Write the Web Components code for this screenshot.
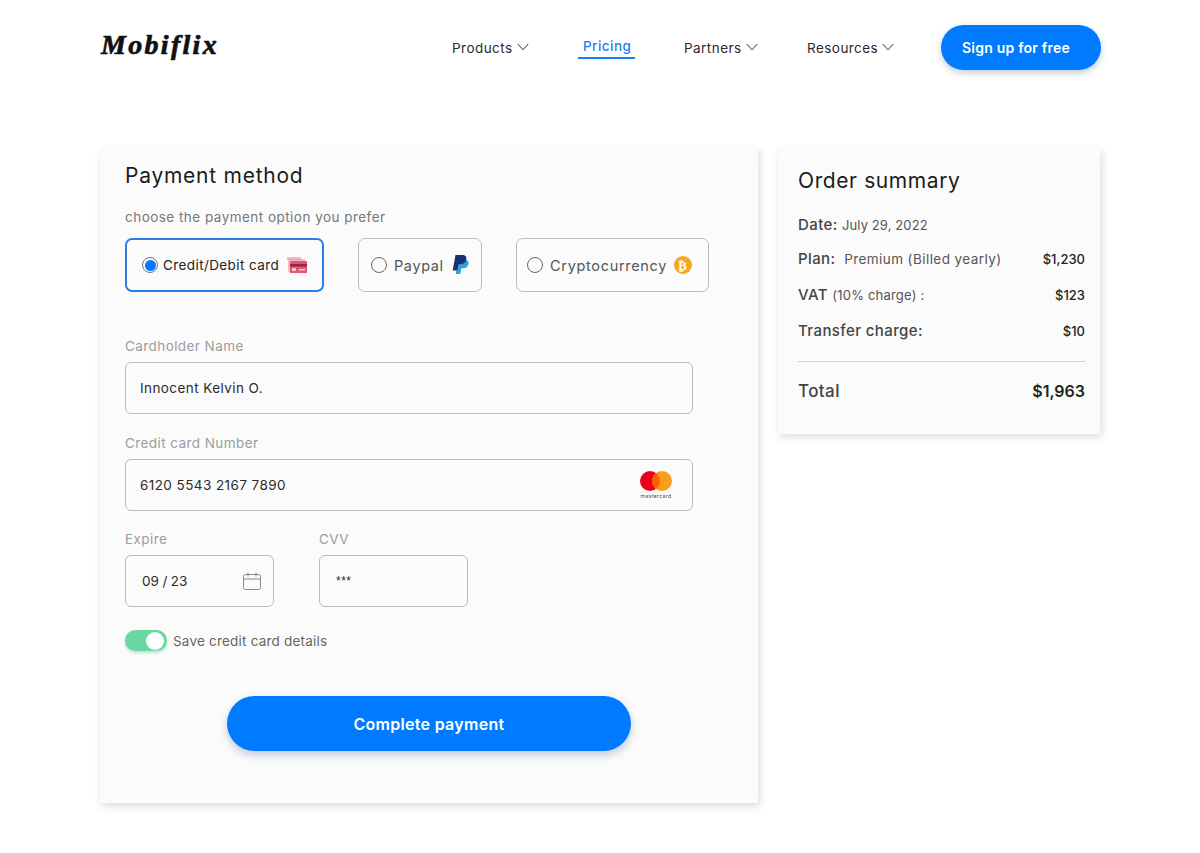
<!DOCTYPE html>
<html lang="en">
<head>
<meta charset="utf-8">
<title>Mobiflix payment</title>
<style>
html,body{margin:0;padding:0;background:#fff;}
body{font-family:"Inter","Liberation Sans",sans-serif;color:#222;}
</style>
</head>
<body>
<mobi-page>
  <mobi-header slot="header"></mobi-header>
  <payment-card slot="main"></payment-card>
  <order-summary slot="side"></order-summary>
</mobi-page>
<script>
const caret = `<svg width="12" height="8" viewBox="0 0 12 8" fill="none" stroke="#333" stroke-width="1"><path d="M.8 1 6 6.800 11.200 1"/></svg>`;

class MobiPage extends HTMLElement {
  constructor() {
    super();
    this.attachShadow({ mode: 'open' }).innerHTML = `
<style>
:host{display:block;width:1200px;height:853px;overflow:hidden;box-sizing:border-box;padding:25px 99px 0 100px;}
.main{display:flex;align-items:flex-start;gap:20px;margin-top:78px;}
</style>
<slot name="header"></slot>
<div class="main"><slot name="main"></slot><slot name="side"></slot></div>`;
  }
}
customElements.define('mobi-page', MobiPage);

class NavLink extends HTMLElement {
  constructor() {
    super();
    const active = this.hasAttribute('active');
    this.attachShadow({ mode: 'open' }).innerHTML = `
<style>
:host{display:flex;align-items:center;gap:4px;font-size:13.5px;letter-spacing:.45px;color:#2b2b2b;height:45px;}
:host([active]){color:#1c7ef0;font-weight:500;margin-top:-4px;}
.t{position:relative;}
:host([active]) .t::after{content:"";position:absolute;left:-5px;right:-4px;bottom:-5px;height:1.5px;background:#1c7ef0;}
svg{margin-top:-1px;}
</style>
<span class="t"><slot></slot></span>${active ? '' : caret}`;
  }
}
customElements.define('nav-link', NavLink);

class MobiHeader extends HTMLElement {
  constructor() {
    super();
    this.attachShadow({ mode: 'open' }).innerHTML = `
<style>
:host{display:flex;align-items:center;height:45px;}
.logo{font:italic 700 28px "Liberation Serif",serif;letter-spacing:2.3px;color:#111;margin:-5px 0 0 1px;width:351px;-webkit-text-stroke:.7px #111;}
nav{display:flex;align-items:center;}
nav-link:nth-child(1){width:131px;}
nav-link:nth-child(2){width:101px;}
nav-link:nth-child(3){width:123px;}
nav-link:nth-child(4){width:134px;}
.cta{box-sizing:border-box;width:160px;height:45px;padding-right:10px;border-radius:23px;background:#007bff;color:#fff;font-size:14px;letter-spacing:.22px;font-weight:600;display:flex;align-items:center;justify-content:center;box-shadow:0 3px 7px rgba(60,90,130,.3);}
</style>
<div class="logo">Mobiflix</div>
<nav>
  <nav-link>Products</nav-link>
  <nav-link active>Pricing</nav-link>
  <nav-link>Partners</nav-link>
  <nav-link>Resources</nav-link>
</nav>
<div class="cta">Sign up for free</div>`;
  }
}
customElements.define('mobi-header', MobiHeader);

class PayOption extends HTMLElement {
  constructor() {
    super();
    this.attachShadow({ mode: 'open' }).innerHTML = `
<style>
:host{display:flex;align-items:center;box-sizing:border-box;height:54px;border:1px solid #bcbcbc;border-radius:7px;padding-left:12px;gap:7px;font-size:14.5px;letter-spacing:.6px;color:#555;}
:host([checked]){border:2px solid #2a7fe6;color:#222;font-size:13.5px;letter-spacing:.4px;padding-left:15px;gap:5px;}
.radio{width:16px;height:16px;border:1px solid #666;border-radius:50%;box-sizing:border-box;flex:none;position:relative;}
:host([checked]) .radio{border:1.5px solid #777;}
:host([checked]) .radio::after{content:"";position:absolute;inset:1.5px;border-radius:50%;background:#007bff;}
</style>
<span class="radio"></span><slot></slot><slot name="icon"></slot>`;
  }
}
customElements.define('pay-option', PayOption);

class FormField extends HTMLElement {
  constructor() {
    super();
    this.attachShadow({ mode: 'open' }).innerHTML = `
<style>
:host{display:block;width:568px;}
:host([short]){width:149px;}
label{display:block;font-size:13.5px;letter-spacing:.42px;color:#9d9d9d;line-height:16px;margin-bottom:8px;}
.box{box-sizing:border-box;height:52px;border:1px solid #bcbcbc;border-radius:6px;display:flex;align-items:center;justify-content:space-between;padding:0 20px 0 14px;font-size:13.5px;letter-spacing:.42px;color:#2b2b2b;}
:host([short]) .box{padding:0 12px 0 16px;letter-spacing:-.1px;}
</style>
<label>${this.getAttribute('label')}</label>
<div class="box"><span><slot></slot></span><slot name="icon"></slot></div>`;
  }
}
customElements.define('form-field', FormField);

class SaveToggle extends HTMLElement {
  constructor() {
    super();
    this.attachShadow({ mode: 'open' }).innerHTML = `
<style>
:host{display:flex;align-items:center;gap:6px;font-size:13.5px;letter-spacing:.2px;color:#666;}
.track{width:42px;height:21px;border-radius:11px;background:#68d8a0;position:relative;box-shadow:0 2px 3px rgba(80,150,120,.3);}
.knob{position:absolute;right:3px;top:1.5px;width:18px;height:18px;border-radius:50%;background:#fff;}
</style>
<span class="track"><span class="knob"></span></span><slot></slot>`;
  }
}
customElements.define('save-toggle', SaveToggle);

class PaymentCard extends HTMLElement {
  constructor() {
    super();
    this.attachShadow({ mode: 'open' }).innerHTML = `
<style>
:host{display:block;box-sizing:border-box;width:658px;height:655px;background:#fbfbfb;padding:15px 0 0 25px;box-shadow:2px 3px 8px rgba(0,0,0,.14);}
h2{margin:0;font-size:21px;line-height:26px;font-weight:400;letter-spacing:.75px;color:#1c1c1c;}
p{margin:20px 0 0;font-size:13.5px;line-height:16px;letter-spacing:.47px;color:#777;}
.options{display:flex;gap:34px;margin-top:13px;}
.f1{margin-top:46px;}
.f2{margin-top:21px;}
.two{display:flex;gap:45px;margin-top:20px;}
.stars{font:12px "Liberation Sans",sans-serif;letter-spacing:.5px;position:relative;top:-1px;}
save-toggle{margin-top:23px;}
.pay{margin:45px 0 0 102px;width:404px;height:55px;border-radius:28px;background:#007bff;color:#fff;font-size:16px;letter-spacing:.3px;font-weight:600;display:flex;align-items:center;justify-content:center;box-shadow:0 4px 9px rgba(60,90,130,.3);}
</style>
<h2>Payment method</h2>
<p>choose the payment option you prefer</p>
<div class="options">
  <pay-option checked style="width:199px">Credit/Debit card
    <svg slot="icon" width="20" height="18" viewBox="0 0 20 18" style="margin-left:3px"><path fill="#f6b7c6" d="M0 1h14v3H0z"/><path fill="#ef8fa8" d="M1 3h17v13H1z" opacity=".6"/><path fill="#e0556f" d="M3 5h17v12H3z"/><path fill="#9c2348" d="M3 8h17v2.500H3z"/><path fill="#f6c9d4" d="M5 12h4v3H5zM12 13h6v1.500h-6z"/></svg>
  </pay-option>
  <pay-option style="width:124px">Paypal
    <svg slot="icon" width="17" height="20" viewBox="0 0 17 20" style="margin-left:1px"><path fill="#2ea3dc" d="M6 5h7.500c2.500 0 3.500 1.800 3 4-.6 2.800-2.600 4.200-5 4.200H9.300L8.300 19H3.800z"/><path fill="#1b2f72" d="M3.500 0h6.800c3 0 4.600 1.700 4 4.500-.6 3.100-2.900 4.800-5.800 4.800H6.500L5.300 15.500H.7z"/></svg>
  </pay-option>
  <pay-option style="width:193px;padding-left:10px;letter-spacing:.68px;gap:7px">Cryptocurrency
    <svg slot="icon" width="18" height="18" viewBox="0 0 18 18"><circle cx="9" cy="9" r="9" fill="#f3a81f"/><text x="9" y="13.500" text-anchor="middle" font-size="13" font-weight="700" font-family="DejaVu Sans" fill="#fff">₿</text></svg>
  </pay-option>
</div>
<form-field class="f1" label="Cardholder Name">Innocent Kelvin O.</form-field>
<form-field class="f2" label="Credit card Number">6120 5543 2167 7890
  <svg slot="icon" width="32" height="28" viewBox="0 0 32 28"><circle cx="10" cy="10" r="10" fill="#e8001c"/><circle cx="22" cy="10" r="10" fill="#f79e1b"/><path d="M16 2a10 10 0 0 1 0 16 10 10 0 0 1 0-16z" fill="#ff5f00"/><text x="16" y="26.500" text-anchor="middle" font-size="5" font-family="Inter" fill="#444">mastercard</text></svg>
</form-field>
<div class="two">
  <form-field short label="Expire">09 / 23
    <svg slot="icon" width="18" height="18" viewBox="0 0 18 18" fill="none" stroke="#888" stroke-width="1"><rect x=".5" y="2.500" width="17" height="15" rx="2"/><path d="M.5 7h17M5 .5v4M13 .5v4"/></svg>
  </form-field>
  <form-field short label="CVV"><span class="stars">***</span></form-field>
</div>
<save-toggle>Save credit card details</save-toggle>
<div class="pay">Complete payment</div>`;
  }
}
customElements.define('payment-card', PaymentCard);

class SummaryRow extends HTMLElement {
  constructor() {
    super();
    this.attachShadow({ mode: 'open' }).innerHTML = `
<style>
:host{display:flex;align-items:baseline;justify-content:space-between;color:#444;}
.l{font-size:15px;font-weight:500;letter-spacing:.4px;color:#444;}
.v{font-size:13px;font-weight:500;color:#222;}
::slotted(small){font-size:13px;font-weight:400;letter-spacing:.2px;color:#555;}
::slotted(small.plan){font-size:13.5px;letter-spacing:.43px;}
::slotted(small.date){letter-spacing:.1px;}
</style>
<span class="l"><slot></slot></span><span class="v"><slot name="value"></slot></span>`;
  }
}
customElements.define('summary-row', SummaryRow);

class OrderSummary extends HTMLElement {
  constructor() {
    super();
    this.attachShadow({ mode: 'open' }).innerHTML = `
<style>
:host{display:block;box-sizing:border-box;width:322px;height:286px;background:#fbfbfb;padding:20px 15px 0 20px;box-shadow:2px 3px 8px rgba(0,0,0,.14);}
h2{margin:0;font-size:21px;line-height:26px;font-weight:400;letter-spacing:.6px;color:#1c1c1c;}
summary-row{height:18px;line-height:18px;margin-top:18px;}
summary-row.first{margin-top:22px;}
hr{border:0;height:1px;background:#cfcfcf;margin:21px 0 0;}
.total{display:flex;align-items:baseline;justify-content:space-between;margin-top:19px;font-size:17px;font-weight:500;letter-spacing:.4px;color:#444;}
.total b{font-size:16px;font-weight:600;letter-spacing:0;color:#222;}
</style>
<h2>Order summary</h2>
<summary-row class="first">Date: <small class="date">July 29, 2022</small></summary-row>
<summary-row style="margin-top:16px">Plan: <small class="plan">&nbsp;Premium (Billed yearly)</small><span slot="value">$1,230</span></summary-row>
<summary-row>VAT <small>(10% charge) :</small><span slot="value">$123</span></summary-row>
<summary-row>Transfer charge:<span slot="value">$10</span></summary-row>
<hr>
<div class="total"><span>Total</span><b>$1,963</b></div>`;
  }
}
customElements.define('order-summary', OrderSummary);
</script>
</body>
</html>
